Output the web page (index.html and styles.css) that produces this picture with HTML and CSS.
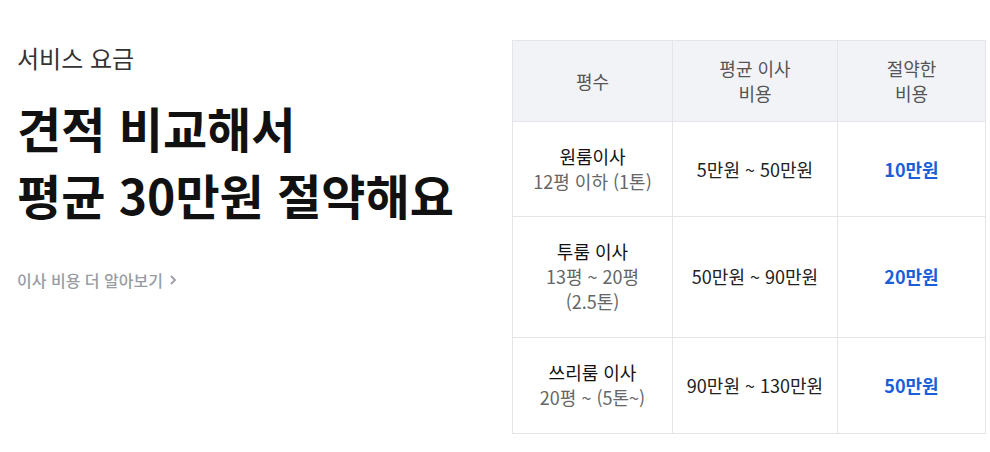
FILE: index.html
```html
<!DOCTYPE html>
<html lang="ko">
<head>
  <meta charset="UTF-8">
  <meta name="viewport" content="width=device-width, initial-scale=1.0">
  <title>서비스 요금</title>
  <link rel="stylesheet" href="styles.css">
</head>
<body>
  <div class="page">
    <div class="intro">
      <p class="eyebrow">서비스 요금</p>
      <h1 class="headline">견적 비교해서<br>평균 30만원 절약해요</h1>
      <a class="more" href="#">이사 비용 더 알아보기
        <svg width="8" height="12" viewBox="0 0 8 12"><path d="M2 2l4 4-4 4" fill="none" stroke="#9a9ea6" stroke-width="1.8"/></svg>
      </a>
    </div>

    <table class="price">
      <thead>
        <tr>
          <th class="c1">평수</th>
          <th class="c2">평균 이사<br>비용</th>
          <th class="c3">절약한<br>비용</th>
        </tr>
      </thead>
      <tbody>
        <tr class="first">
          <td><b>원룸이사</b><br><span class="sub">12평 이하 (1톤)</span></td>
          <td>5만원 ~ 50만원</td>
          <td class="save">10만원</td>
        </tr>
        <tr>
          <td><b>투룸 이사</b><br><span class="sub">13평 ~ 20평<br>(2.5톤)</span></td>
          <td>50만원 ~ 90만원</td>
          <td class="save">20만원</td>
        </tr>
        <tr>
          <td><b>쓰리룸 이사</b><br><span class="sub">20평 ~ (5톤~)</span></td>
          <td>90만원 ~ 130만원</td>
          <td class="save">50만원</td>
        </tr>
      </tbody>
    </table>
  </div>
</body>
</html>
```

FILE: styles.css
```css
*{
  margin: 0;
  padding: 0;
  box-sizing: border-box;
}
body{
  font-family: "Noto Sans CJK KR", "Noto Sans", sans-serif;
  color: #222;
  background: #fff;
}
.page{
  display: flex;
  justify-content: space-between;
  align-items: flex-start;
  padding: 40px 4px 0 17px;
}
.intro{
  padding-top: 2px;
}
.eyebrow{
  font-size: 24px;
  line-height: 32px;
  color: #333;
}
.headline{
  margin-top: 20px;
  font-size: 48px;
  line-height: 67px;
  font-weight: 700;
  color: #111;
}
.more{
  display: inline-flex;
  align-items: center;
  gap: 6px;
  margin-top: 41px;
  font-size: 16px;
  line-height: 22px;
  font-weight: 500;
  color: #999ca3;
  text-decoration: none;
}
.price{
  width: 473px;
  border-collapse: collapse;
  table-layout: fixed;
  font-size: 18px;
  line-height: 25px;
  text-align: center;
}
.price th,
.price td{
  border: 1px solid #e4e5e9;
}
.price th{
  padding: 15px 0;
  background: #f2f3f7;
  font-weight: 400;
  color: #555;
}
.price td{
  padding: 22px 0 23px;
  color: #222;
}
.price .first td{
  padding-bottom: 22px;
}
.c1{ width: 160px; }
.c2{ width: 165px; }
.c3{ width: 148px; }
.price b{
  font-weight: 400;
  color: #111;
}
.price .sub{
  color: #666;
}
.price .save{
  color: #1a5fd8;
  font-weight: 700;
}
```
